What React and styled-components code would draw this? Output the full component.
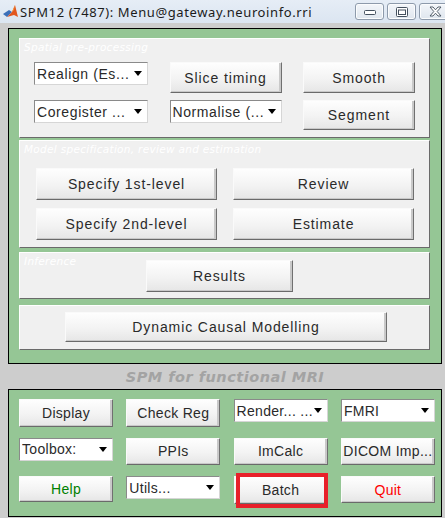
import React from 'react';
import styled, { createGlobalStyle } from 'styled-components';

const GlobalStyle = createGlobalStyle`
  html, body {
    margin: 0;
    padding: 0;
    background: #cdcdcd;
  }
  body {
    width: 445px;
    height: 518px;
    overflow: hidden;
    font-family: "Liberation Sans", sans-serif;
  }
`;

const Window = styled.div`
  width: 445px;
  height: 518px;
  display: flex;
  flex-direction: column;
  background: #cdcdcd;
  overflow: hidden;
`;

const TitleBar = styled.div`
  height: 23px;
  flex: none;
  display: flex;
  align-items: center;
  padding-left: 3px;
  background: linear-gradient(to bottom, #e6edf6, #dbe5f1);
  box-sizing: border-box;
`;

const TitleText = styled.div`
  margin-left: 2px;
  font-family: "Noto Sans", "Open Sans", sans-serif;
  font-size: 13px;
  letter-spacing: 0.6px;
  color: #1b1b1b;
  flex: 1;
  white-space: nowrap;
`;

const Controls = styled.div`
  display: flex;
  gap: 3px;
  align-self: flex-start;
  margin-top: 3px;
  margin-right: -6px;
`;

const CtrlButton = styled.div`
  width: ${(p) => p.$w || 29}px;
  height: 17px;
  box-sizing: border-box;
  border: 1px solid #8d9aab;
  border-radius: 3px;
  background: linear-gradient(to bottom, #f3f6fa, #dfe6ee);
  box-shadow: inset 0 0 0 1px #fbfcfd;
  display: flex;
  align-items: center;
  justify-content: center;
`;

const Body = styled.div`
  flex: 1;
  display: flex;
  flex-direction: column;
  padding: 5px 3px 0 8px;
`;

const Frame = styled.div`
  box-sizing: border-box;
  width: 434px;
  height: ${(p) => p.$h}px;
  border: 1px solid #000;
  background: #95c695;
`;

const MainFrame = styled(Frame)`
  display: flex;
  flex-direction: column;
  padding: 9px 11px 0 10px;
`;

const Panel = styled.div`
  position: relative;
  box-sizing: border-box;
  height: ${(p) => p.$h}px;
  margin-top: ${(p) => p.$mt || 0}px;
  padding: ${(p) => p.$pad};
  background: #f0f0f0;
  border: 1px solid;
  border-color: #ffffff #6a6a6a #6a6a6a #ffffff;
`;

const PanelLabel = styled.div`
  position: absolute;
  top: 2px;
  left: 4px;
  font-family: "DejaVu Sans", sans-serif;
  font-style: italic;
  font-size: 10.5px;
  letter-spacing: 0.3px;
  color: #ffffff;
  pointer-events: none;
`;

const Grid = styled.div`
  display: grid;
  grid-template-columns: ${(p) => p.$cols};
  grid-template-rows: ${(p) => p.$rows};
  column-gap: ${(p) => p.$cgap}px;
  row-gap: ${(p) => p.$rgap}px;
  align-items: start;
`;

const Button = styled.button`
  position: relative;
  box-sizing: border-box;
  display: block;
  width: ${(p) => (p.$w ? `${p.$w}px` : '100%')};
  height: ${(p) => p.$h || 31}px;
  margin: 0;
  padding: 0;
  font-family: "Liberation Sans", sans-serif;
  font-weight: 400;
  font-size: 14px;
  letter-spacing: 0.9px;
  color: ${(p) => p.$color || '#2a2a2a'};
  background: linear-gradient(to bottom, #fefefe 0%, #f3f3f3 55%, #e6e6e6 100%);
  border: 1px solid;
  border-color: #fafafa #707070 #6a6a6a #fafafa;
  box-shadow: inset -2px -1px 0 #c9c9c9;
  border-radius: 0;
  white-space: nowrap;
  overflow: hidden;
`;

const Select = styled.div`
  box-sizing: border-box;
  height: 23px;
  display: flex;
  align-items: center;
  padding-left: 2px;
  padding-right: 5px;
  background: #ffffff;
  border: 1px solid;
  border-color: #8a8a8a #d6d6d6 #d6d6d6 #8a8a8a;
  font-family: "Liberation Sans", sans-serif;
  font-size: 14px;
  letter-spacing: 0.6px;
  color: #2a2a2a;
  white-space: nowrap;
  overflow: hidden;
`;

const SelectText = styled.span`
  flex: 1;
  overflow: hidden;
`;

const Arrow = styled.span`
  width: 0;
  height: 0;
  border-left: 4px solid transparent;
  border-right: 4px solid transparent;
  border-top: 5px solid #000;
  flex: none;
`;

const Caption = styled.div`
  height: 25px;
  display: flex;
  align-items: center;
  justify-content: center;
  font-family: "DejaVu Sans", sans-serif;
  font-weight: bold;
  font-style: italic;
  font-size: 14.5px;
  letter-spacing: 0.5px;
  color: #a3a3a3;
  width: 434px;
`;

const ToolFrame = styled(Frame)`
  padding: 9px 0 0 10px;

  ${Button}, ${Select} {
    letter-spacing: 0.3px;
  }
`;

const Cell = styled.div`
  position: relative;
`;

const Highlight = styled.div`
  position: absolute;
  left: 2px;
  top: -3px;
  width: 92px;
  height: 35px;
  box-sizing: border-box;
  border: 4px solid #e8202a;
  pointer-events: none;
`;

const Dropdown = ({ children }) => (
  <Select>
    <SelectText>{children}</SelectText>
    <Arrow />
  </Select>
);

const MatlabIcon = () => (
  <svg width="15" height="15" viewBox="0 0 15 15">
    <polygon points="0,10 6,6 9,8 4,13" fill="#3b6fb8" />
    <polygon points="4,13 9,8 12,1 15,13 11,11" fill="#e2561f" />
    <polygon points="9,8 12,1 11,6" fill="#f19a3c" />
  </svg>
);

export default function App() {
  return (
    <Window>
      <GlobalStyle />
      <TitleBar>
        <MatlabIcon />
        <TitleText>SPM12 (7487): Menu@gateway.neuroinfo.rri</TitleText>
        <Controls>
          <CtrlButton>
            <svg width="12" height="6" viewBox="0 0 12 6">
              <rect x="0.5" y="1.5" width="11" height="4" rx="1" fill="#fff" stroke="#44505e" />
            </svg>
          </CtrlButton>
          <CtrlButton>
            <svg width="12" height="10" viewBox="0 0 12 10">
              <rect x="0.5" y="0.5" width="11" height="9" rx="1" fill="#fff" stroke="#44505e" />
              <rect x="2.5" y="3" width="7" height="4.5" fill="none" stroke="#44505e" />
            </svg>
          </CtrlButton>
          <CtrlButton $w={32}>
            <svg width="13" height="11" viewBox="0 0 13 11">
              <path d="M1 1 L4 1 L6.5 3.8 L9 1 L12 1 L8.2 5.5 L12 10 L9 10 L6.5 7.2 L4 10 L1 10 L4.8 5.5 Z" fill="#fff" stroke="#44505e" strokeWidth="0.9" />
            </svg>
          </CtrlButton>
        </Controls>
      </TitleBar>

      <Body>
        <MainFrame $h={336}>
          <Panel $h={100} $pad="23px 0 0 14px">
            <PanelLabel>Spatial pre-processing</PanelLabel>
            <Grid $cols="114px 112px 112px" $rows="31px 31px" $cgap={21.5} $rgap={7}>
              <Dropdown>Realign (Es...</Dropdown>
              <Button>Slice timing</Button>
              <Button>Smooth</Button>
              <Dropdown>Coregister ...</Dropdown>
              <Dropdown>Normalise (...</Dropdown>
              <Button $h={30}>Segment</Button>
            </Grid>
          </Panel>

          <Panel $h={108} $mt={2} $pad="27px 0 0 16px">
            <PanelLabel>Model specification, review and estimation</PanelLabel>
            <Grid $cols="181px 181px" $rows="32px 32px" $cgap={16} $rgap={8}>
              <Button $h={32}>Specify 1st-level</Button>
              <Button $h={32}>Review</Button>
              <Button $h={32}>Specify 2nd-level</Button>
              <Button $h={32}>Estimate</Button>
            </Grid>
          </Panel>

          <Panel $h={47} $mt={4} $pad="7px 0 0 126px">
            <PanelLabel>Inference</PanelLabel>
            <Button $w={147} $h={32}>Results</Button>
          </Panel>

          <Panel $h={45} $mt={6} $pad="6px 0 0 45px">
            <Button $w={322} $h={30}>Dynamic Causal Modelling</Button>
          </Panel>
        </MainFrame>

        <Caption>SPM for functional MRI</Caption>

        <ToolFrame $h={128}>
          <Grid $cols="94px 94px 94px 94px" $rows="28px 28px 28px" $cgap={13.3} $rgap={10.5}>
            <Button $h={28}>Display</Button>
            <Button $h={28}>Check Reg</Button>
            <Dropdown>Render... ...</Dropdown>
            <Dropdown>FMRI</Dropdown>

            <Dropdown>Toolbox:</Dropdown>
            <Button $h={27}>PPIs</Button>
            <Button $h={27}>ImCalc</Button>
            <Button $h={27}>DICOM Imp...</Button>

            <Button $h={26} $color="#008000">Help</Button>
            <Dropdown>Utils...</Dropdown>
            <Cell>
              <Button $h={28}>Batch</Button>
              <Highlight />
            </Cell>
            <Button $h={27} $color="#ff0000">Quit</Button>
          </Grid>
        </ToolFrame>
      </Body>
    </Window>
  );
}
